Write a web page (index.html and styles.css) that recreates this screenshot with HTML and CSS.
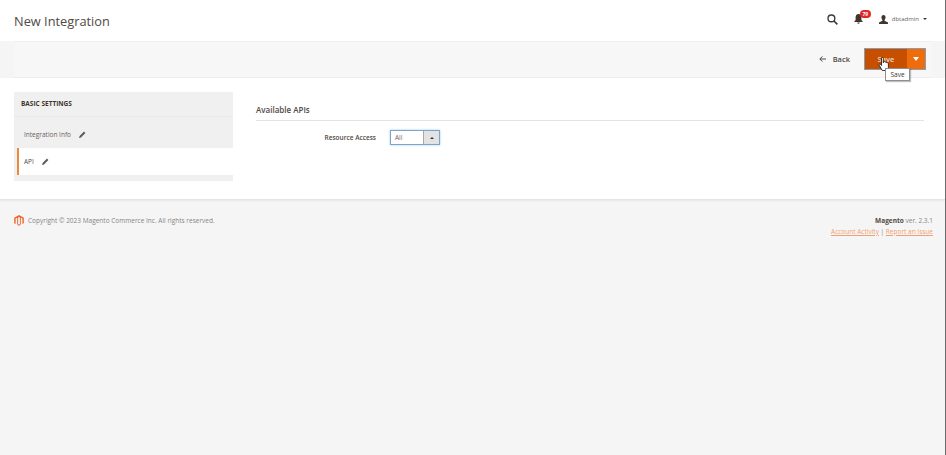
FILE: index.html
```html
<!DOCTYPE html>
<html lang="en">
<head>
<meta charset="utf-8">
<title>New Integration</title>
<link rel="stylesheet" href="styles.css">
</head>
<body>
<div class="page">
  <header class="top">
    <h1 class="title">New Integration</h1>
    <div class="tools">
      <svg class="search" width="11" height="11" viewBox="0 0 12 12"><circle cx="4.800" cy="4.800" r="3.700" fill="none" stroke="#3a3a3a" stroke-width="1.500"/><path d="M7.600 7.600 11.300 11.300" stroke="#3a3a3a" stroke-width="1.800"/></svg>
      <span class="bell">
        <svg width="9" height="10" viewBox="0 0 9 10"><path d="M4.500 0C2.500 0 1.600 1.600 1.600 3.600V6L0 8h9L7.400 6V3.600C7.400 1.600 6.500 0 4.500 0ZM3.300 8.600a1.200 1.200 0 0 0 2.400 0Z" fill="#41362f"/></svg>
        <span class="badge">79</span>
      </span>
      <span class="user">
        <svg width="9" height="9" viewBox="0 0 10 10"><path d="M5 0C3.500 0 2.700 1.100 2.700 2.600 2.700 4 3.400 5 3.800 5.500V6.400L0 8.200V10h10V8.200L6.200 6.400V5.500C6.600 5 7.300 4 7.300 2.600 7.300 1.100 6.500 0 5 0Z" fill="#41362f"/></svg>
        <span class="uname">dbtadmin</span>
        <span class="caret"></span>
      </span>
    </div>
  </header>
  <div class="actions">
    <span class="back"><svg class="arrow" width="7" height="6" viewBox="0 0 7 6"><path d="M7 3H1M3.400.4.800 3l2.600 2.600" fill="none" stroke="#514943" stroke-width="1"/></svg>Back</span>
    <div class="split">
      <span class="save">Save</span>
      <span class="drop"><span class="drop-caret"></span></span>
      <svg class="cursor" width="13" height="16" viewBox="0 0 13 16"><path d="M3.500 1.200c0-1 1.800-1 1.800 0v4.600l.4-1.200c1-.4 1.500 0 1.600.6.800-.4 1.400-.1 1.500.6.800-.3 1.600 0 1.600.9v3.800c0 1.300-.5 2-1 3H4.300L1.200 8.300c-.6-1 .5-1.800 1.300-1l1 1.200Z" fill="#fff" stroke="#222" stroke-width=".9"/></svg>
      <span class="tip">Save</span>
    </div>
  </div>
  <main class="content">
    <aside class="side">
      <div class="side-head">BASIC SETTINGS</div>
      <div class="side-item">
        <span>Integration Info</span>
        <svg class="pen" width="7" height="7" viewBox="0 0 7 7"><path d="M0 7 .6 5 5 .6 6.400 2 2 6.400Z" fill="#5a5a5a"/></svg>
      </div>
      <div class="side-item active">
        <span>API</span>
        <svg class="pen" width="7" height="7" viewBox="0 0 7 7"><path d="M0 7 .6 5 5 .6 6.400 2 2 6.400Z" fill="#5a5a5a"/></svg>
      </div>
      <div class="side-foot"></div>
    </aside>
    <section class="panel">
      <h2 class="panel-title">Available APIs</h2>
      <div class="field">
        <label class="field-label">Resource Access</label>
        <div class="select">
          <span class="select-value">All</span>
          <span class="select-btn"><span class="select-caret"></span></span>
        </div>
      </div>
    </section>
  </main>
  <footer class="foot">
    <div class="copy">
      <svg width="10" height="11" viewBox="0 0 10 11"><path d="M5 0 .2 2.700V8.300L1.600 9.100V3.600L3.200 2.700V9.300L5 11 6.800 9.300V2.700L8.400 3.600V9.100L9.800 8.300V2.700Z M5 1.900 5.900 2.400V9L5 9.700 4.100 9V2.400Z" fill="#f26322" fill-rule="evenodd"/></svg>
      <span>Copyright © 2023 Magento Commerce Inc. All rights reserved.</span>
    </div>
    <div class="meta">
      <div class="version"><b>Magento</b> ver. 2.3.1</div>
      <div class="links"><a class="link">Account Activity</a> | <a class="link">Report an Issue</a></div>
    </div>
  </footer>
</div>
</body>
</html>
```
FILE: styles.css
```css
* { box-sizing: border-box; }
html, body { margin: 0; height: 100%; }
body { font-family: "Open Sans", "Noto Sans", sans-serif; color: #41362f; background: #f5f5f5; }
.page { width: 946px; height: 455px; display: flex; flex-direction: column; overflow: hidden; border-right: 1px solid #6b6b6b; }
.top { height: 41px; background: #fff; padding: 0 18px 0 14px; display: flex; justify-content: space-between; align-items: center; flex: none; }
.title { margin: 0; font-size: 12.800px; font-weight: 400; line-height: 18px; color: #514943; }
.tools { display: flex; align-items: center; margin-top: -3px; }
.search { margin-right: 16px; }
.bell { position: relative; display: flex; margin-right: 16px; }
.badge { position: absolute; left: 6px; top: -4px; width: 11px; height: 8px; border-radius: 4px; background: #e22626; color: #fff; font-size: 5px; font-weight: 700; line-height: 8px; text-align: center; }
.user { display: flex; align-items: center; }
.uname { font-size: 6px; margin-left: 4px; color: #6a625c; }
.caret { margin-left: 4px; border: 2px solid transparent; border-top-color: #41362f; border-bottom: 0; }
.actions { height: 37px; margin: 0 13px 0 14px; background: #f7f7f7; border-top: 1px solid #eeeeee; border-bottom: 1px solid #eeeeee; display: flex; justify-content: flex-end; align-items: center; padding: 0 6px 1px 0; flex: none; position: relative; z-index: 2; }
.back { font-size: 7.500px; font-weight: 600; color: #514943; margin-right: 14px; display: flex; align-items: center; }
.arrow { margin-right: 7px; }
.split { position: relative; display: flex; height: 22px; border: 1px solid #8a9db0; }
.save { width: 42px; background: #c64f00; color: #f3d9c6; font-size: 7.500px; font-weight: 600; display: flex; align-items: center; justify-content: center; }
.drop { width: 18px; background: #ee6c0c; display: flex; align-items: center; justify-content: center; }
.drop-caret { border-left: 3px solid transparent; border-right: 3px solid transparent; border-top: 4px solid #fff; }
.cursor { position: absolute; left: 13px; top: 8px; }
.tip { position: absolute; left: 20px; top: 19px; width: 25px; height: 13px; background: #fff; border: 1px solid #8f8f8f; box-shadow: 1px 1px 1px rgba(0,0,0,.25); font-size: 6.500px; line-height: 11px; text-align: center; color: #41362f; }
.content { height: 122px; background: #fff; display: flex; padding: 14px 21px 0 14px; border-bottom: 1px solid #e6e6e6; box-shadow: 0 1px 2px rgba(0,0,0,.06); flex: none; position: relative; }
.side { width: 219px; flex: none; align-self: flex-start; background: #f0f0f0; }
.side-head { height: 25px; padding-left: 7px; font-size: 6.500px; font-weight: 700; line-height: 24px; color: #41362f; border-bottom: 1px solid #e8e8e8; }
.side-item { display: flex; align-items: center; gap: 8px; height: 31px; padding: 3px 0 0 10px; font-size: 6.500px; color: #6a625c; }
.side-item.active { height: 27px; margin-left: 3px; padding: 0 0 1px 5px; background: #fff; border-left: 2px solid #eb8a3e; color: #514943; }
.side-foot { height: 6px; }
.panel { flex: 1; margin: 14px 0 0 23px; }
.panel-title { margin: 0; height: 15px; font-size: 8px; font-weight: 600; line-height: 8px; color: #514943; border-bottom: 1px solid #e3e3e3; }
.field { display: flex; align-items: center; margin-top: 9px; }
.field-label { width: 120px; text-align: right; font-size: 6.500px; font-weight: 600; color: #514943; }
.select { margin-left: 14px; width: 50px; height: 15px; display: flex; border: 1px solid #7aa6cc; box-shadow: 0 0 2px rgba(0,120,200,.4); }
.select-value { flex: 1; font-size: 6.500px; line-height: 13px; padding-left: 4px; background: #fff; color: #6a625c; }
.select-btn { width: 16px; background: #e3e3e3; border-left: 1px solid #a9a9a9; display: flex; align-items: center; justify-content: center; }
.select-caret { border-left: 2px solid transparent; border-right: 2px solid transparent; border-bottom: 2px solid #41362f; }
.foot { flex: 1; display: flex; justify-content: space-between; padding: 14px 12px 0 14px; background: #f5f5f5; font-size: 6.500px; }
.copy { display: flex; align-items: center; gap: 4px; height: 12px; color: #858585; }
.meta { text-align: right; color: #858585; line-height: 11px; margin-top: 1px; }
.version b { color: #514943; }
.links { color: #858585; }
.link { color: #f2a071; text-decoration: underline; }
```
